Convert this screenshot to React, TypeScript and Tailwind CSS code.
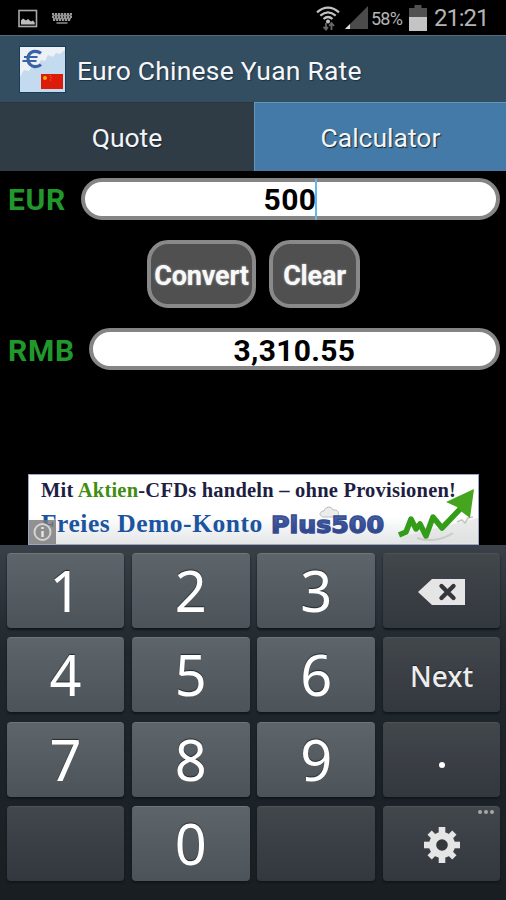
import React from "react";

function StatusBar() {
  return (
    <div className="relative flex h-[35px] shrink-0 items-center bg-black text-[#b4b4b4]">
      <svg className="ml-[18px] mt-px h-[19px] w-[20px]" viewBox="0 0 20 19">
        <rect x="1" y="1.5" width="17.5" height="16" fill="none" stroke="#a9a9a9" strokeWidth="1.6" />
        <path d="M3 15.5V11.5L5 9.5L8 11.5L10 10L13 12.5L15 11.5L16.7 13.5V15.5Z" fill="#bdbdbd" />
      </svg>
      <svg className="ml-[13px] mt-px h-[13px] w-[22px]" viewBox="0 0 22 13">
        <path d="M1 2H21M1 5H21M2 8H20" fill="none" stroke="#9a9a9a" strokeWidth="2.2" strokeDasharray="2.2 0.8" />
        <path d="M1.5 3.5H20.5M2 6.5H20M5.5 11H16.5" fill="none" stroke="#8d8d8d" strokeWidth="1.6" />
      </svg>
      <svg className="ml-auto h-[28px] w-[26px]" viewBox="0 0 26 28">
        <g fill="none" stroke="#c3c3c3" strokeWidth="2.2">
          <path d="M2 8.3Q13 -1.2 24 8.3" />
          <path d="M5.3 11.7Q13 5 20.7 11.7" />
          <path d="M8.5 15Q13 11 17.5 15" />
        </g>
        <circle cx="13" cy="17.4" r="2" fill="#c3c3c3" />
        <path d="M11 19V25M8.5 22.8L11 25.5L13 23M16.5 26V20M14.2 21.8L16.5 19.2L19 21.8" fill="none" stroke="#686868" strokeWidth="1.8" />
      </svg>
      <svg className="ml-[3px] h-[26px] w-[25px]" viewBox="0 0 25 26">
        <path d="M1 24L24 1V24Z" fill="#4b4b4b" />
        <path d="M1 24L6 19V24Z" fill="#e0e0e0" />
      </svg>
      <span className="ml-[2px] mt-[2px] w-[33px] whitespace-nowrap text-[18px] leading-5 tracking-[-0.8px]">58%</span>
      <svg className="ml-[5px] h-[28px] w-[18px]" viewBox="0 0 18 28">
        <path d="M5.5 1H12.5V4H18V13H0V4H5.5Z" fill="#505050" />
        <path d="M0 13H18V27H0Z" fill="#c4c4c4" />
      </svg>
      <span className="ml-[7px] mr-[17px] mt-px w-[55px] whitespace-nowrap text-[24px] leading-7 tracking-[-1.1px]">21:21</span>
    </div>
  );
}

function AppIcon() {
  return (
    <svg className="ml-[19px] h-[47px] w-[47px] shrink-0" viewBox="0 0 47 47">
      <rect width="47" height="47" fill="#173d5c" />
      <rect x="1" y="1" width="45" height="45" fill="#c3daef" />
      <path d="M1 1H46V4L41 8L37 7L34 11L29 9L26 15L22 14L19 20L14 19L10 25L5 24L1 31Z" fill="#edf1f5" />
      <g fill="none" stroke="#3863a4">
        <path d="M22 7.2Q18.5 4.6 14 5.6Q8.8 7.5 9 13Q9.4 19.6 15.5 20.6Q19.5 20.8 22 18.6" strokeWidth="3.2" />
        <path d="M5 11H18.5M3.5 15H17.5" strokeWidth="2.2" />
      </g>
      <rect x="22" y="28" width="22" height="15" fill="#dc1b09" />
      <circle cx="26" cy="32" r="2" fill="#f0a516" />
      <path d="M30.5 29.5H31.5M31.5 31.5H32.5M31 34H32" stroke="#e88c1a" strokeWidth="1" />
    </svg>
  );
}

function AdBanner() {
  return (
    <div className="relative ml-[28px] mt-[104px] h-[71px] w-[451px] shrink-0 overflow-hidden border border-[#9ba5c7] bg-linear-to-b from-white from-60% to-[#e3e5e7] font-['Liberation_Serif',serif] font-bold">
      <div className="flex flex-col">
        <div className="ml-[12px] mt-[3px] h-[24px] whitespace-nowrap text-[20.5px] leading-6 tracking-[0.22px] text-[#1d1e42]">
          Mit <span className="text-[#408d14]">Aktien</span>-CFDs handeln – ohne Provisionen!
        </div>
        <div className="ml-[12px] mt-[8px] h-[28px] whitespace-nowrap text-[25.5px] leading-7 tracking-[0.54px] text-[#1b54a0]">Freies Demo-Konto</div>
      </div>
      <svg className="absolute inset-0 h-[69px] w-[449px]" viewBox="0 0 449 69">
        <defs>
          <linearGradient id="blue" x1="0" y1="0" x2="0" y2="1">
            <stop offset="0" stopColor="#5269a9" />
            <stop offset="1" stopColor="#263b85" />
          </linearGradient>
        </defs>
        <path d="M297 42C290 43 289 36 295 36C296 31 303 31 304 35C311 34 311 42 306 42Z" fill="#ececec" stroke="#bbb" />
        <text x="242" y="58" textLength="113" lengthAdjust="spacingAndGlyphs" fontFamily="DejaVu Sans" fontSize="23" fontWeight="700" fill="url(#blue)" stroke="#354d92" strokeWidth="1.4">Plus500</text>
        <path d="M372 62L449 43V68H372Z" fill="#dddddd" opacity=".55" />
        <path d="M388 63Q407 69 424 58" fill="none" stroke="#c9cbc9" strokeWidth="2" />
        <path d="M428 47L433 45L436 48L439 43L444 42" fill="none" stroke="#c4c6c4" strokeWidth="1.5" />
        <path d="M370 60L377 57L382 44L387 54L391 49L397 61L404 42L413 53L434 31" fill="none" stroke="#339c18" strokeWidth="5.5" strokeLinejoin="round" />
        <path d="M445 14L441 43L433 37L428 32L417 27Z" fill="#45a51f" />
        <rect x="0" y="45" width="27" height="24" fill="#777" opacity=".8" />
        <circle cx="13.5" cy="57" r="8" fill="#8e8e8e" stroke="#d3d3d3" strokeWidth="2" />
        <path d="M13.5 52V54M13.5 56V62" stroke="#e6e6e6" strokeWidth="2.4" />
      </svg>
    </div>
  );
}

function Key({ label, dark = false, children }: { label?: string; dark?: boolean; children?: React.ReactNode }) {
  return (
    <div className={`relative flex h-[75px] items-center justify-center rounded-[4px] shadow-[0_2px_2px_#12171b] ${dark ? "border-t border-[#4c5258] bg-linear-to-b from-[#42474c] to-[#33373e]" : "border-t border-[#6e767c] bg-linear-to-b from-[#5d656b] to-[#4c545a]"}`}>
      {label && <span className="-mt-px font-['Noto_Sans',sans-serif] text-[56px] leading-[75px] text-white [text-shadow:0_-1px_1px_#252a2e]">{label}</span>}
      {children}
    </div>
  );
}

function Keyboard() {
  return (
    <div className="grid min-h-0 flex-1 auto-rows-[75px] grid-cols-[117px_118px_118px_117px] content-start gap-x-[7.7px] gap-y-[9.4px] bg-linear-to-b from-[#394047] via-[#20282e] via-30% to-[#191e22] pl-[7px] pt-[8px]">
      <Key label="1" /><Key label="2" /><Key label="3" />
      <Key dark>
        <svg className="mt-px h-[30px] w-[50px]" viewBox="0 0 50 30">
          <path d="M1 15L15 2H48V28H15Z" fill="#e5e5e5" />
          <path d="M24.5 9L36.5 21M36.5 9L24.5 21" stroke="#34383d" strokeWidth="4.4" strokeLinecap="round" />
        </svg>
      </Key>
      <Key label="4" /><Key label="5" /><Key label="6" />
      <Key dark><span className="mt-px font-['Noto_Sans',sans-serif] text-[28px] font-medium leading-9 text-[#ededed] [text-shadow:0_-1px_1px_#202327]">Next</span></Key>
      <Key label="7" /><Key label="8" /><Key label="9" />
      <Key dark><span className="mt-[11px] size-[6px] rounded-full bg-white" /></Key>
      <Key dark /><Key label="0" /><Key dark />
      <Key dark>
        <svg className="mt-px size-[38px]" viewBox="-19 -19 38 38">
          <g fill="#e5e5e5">
            <circle r="13" />
            <rect x="-3.3" y="-18" width="6.6" height="36" />
            <rect x="-18" y="-3.3" width="36" height="6.6" />
            <rect x="-3" y="-17.5" width="6" height="35" transform="rotate(45)" />
            <rect x="-3" y="-17.5" width="6" height="35" transform="rotate(-45)" />
          </g>
          <circle r="5.8" fill="#34383d" />
        </svg>
        <div className="absolute right-[6px] top-[3px] flex gap-[2px]">
          <i className="size-[4px] rounded-full bg-[#a5a7aa]" />
          <i className="size-[4px] rounded-full bg-[#a5a7aa]" />
          <i className="size-[4px] rounded-full bg-[#a5a7aa]" />
        </div>
      </Key>
    </div>
  );
}

export default function App() {
  return (
    <main className="flex h-[900px] w-[506px] flex-col overflow-hidden bg-black font-['Roboto',sans-serif]">
      <StatusBar />
      <header className="flex h-[67px] shrink-0 items-center border-t border-[#526b7d] bg-[#334d61]">
        <AppIcon />
        <h1 className="ml-[11px] mt-[3px] whitespace-nowrap text-[26.5px] leading-8 tracking-[0.2px] text-[#f7f7f7] [text-shadow:1px_1px_1px_#17344b]">Euro Chinese Yuan Rate</h1>
      </header>
      <nav className="grid h-[69px] shrink-0 grid-cols-[254px_1fr] grid-rows-[69px] text-center text-[26.5px] leading-[69px] text-[#f2f5f8] [text-shadow:1px_1px_1px_#182631]">
        <div className="h-[69px] border-t border-[#293640] bg-[#303c45]">Quote</div>
        <div className="h-[69px] border-t border-l border-[#6196bd] bg-[#437aa8]">Calculator</div>
      </nav>
      <div className="mt-[7px] flex h-[42px] shrink-0 items-center pl-[8px] pr-[6px]">
        <span className="mt-[2px] w-[73px] text-[30px] font-bold leading-9 tracking-[0.7px] text-[#20982b]">EUR</span>
        <div className="flex h-[42px] flex-1 items-center justify-center rounded-full border-4 border-[#858585] bg-white text-[30px] font-bold text-black">
          <span className="mt-[2px] leading-9 tracking-[0.4px]">500</span><i className="-ml-px h-[41px] w-[2px] bg-[#66b5ec]" />
        </div>
      </div>
      <div className="mt-[20px] flex h-[68px] shrink-0 gap-[13px] pl-[147px] text-[27px] font-bold text-[#f8f8f8] [text-shadow:0_0_2px_#bbb]">
        <div className="flex w-[109px] items-center justify-center rounded-[21px] border-4 border-[#898989] bg-[#505050]"><span className="mt-[4px] tracking-[-0.2px]">Convert</span></div>
        <div className="flex w-[91px] items-center justify-center rounded-[21px] border-4 border-[#898989] bg-[#505050]"><span className="mt-[4px] tracking-[-0.2px]">Clear</span></div>
      </div>
      <div className="mt-[20px] flex h-[42px] shrink-0 items-center pl-[8px] pr-[6px]">
        <span className="mt-[4px] w-[81px] text-[30px] font-bold leading-9 tracking-[0.7px] text-[#20982b]">RMB</span>
        <div className="flex h-[42px] flex-1 items-center justify-center rounded-full border-4 border-[#858585] bg-white text-[30px] font-bold text-black">
          <span className="mt-[4px] leading-9 tracking-[0.3px]">3,310.55</span>
        </div>
      </div>
      <AdBanner />
      <Keyboard />
    </main>
  );
}
